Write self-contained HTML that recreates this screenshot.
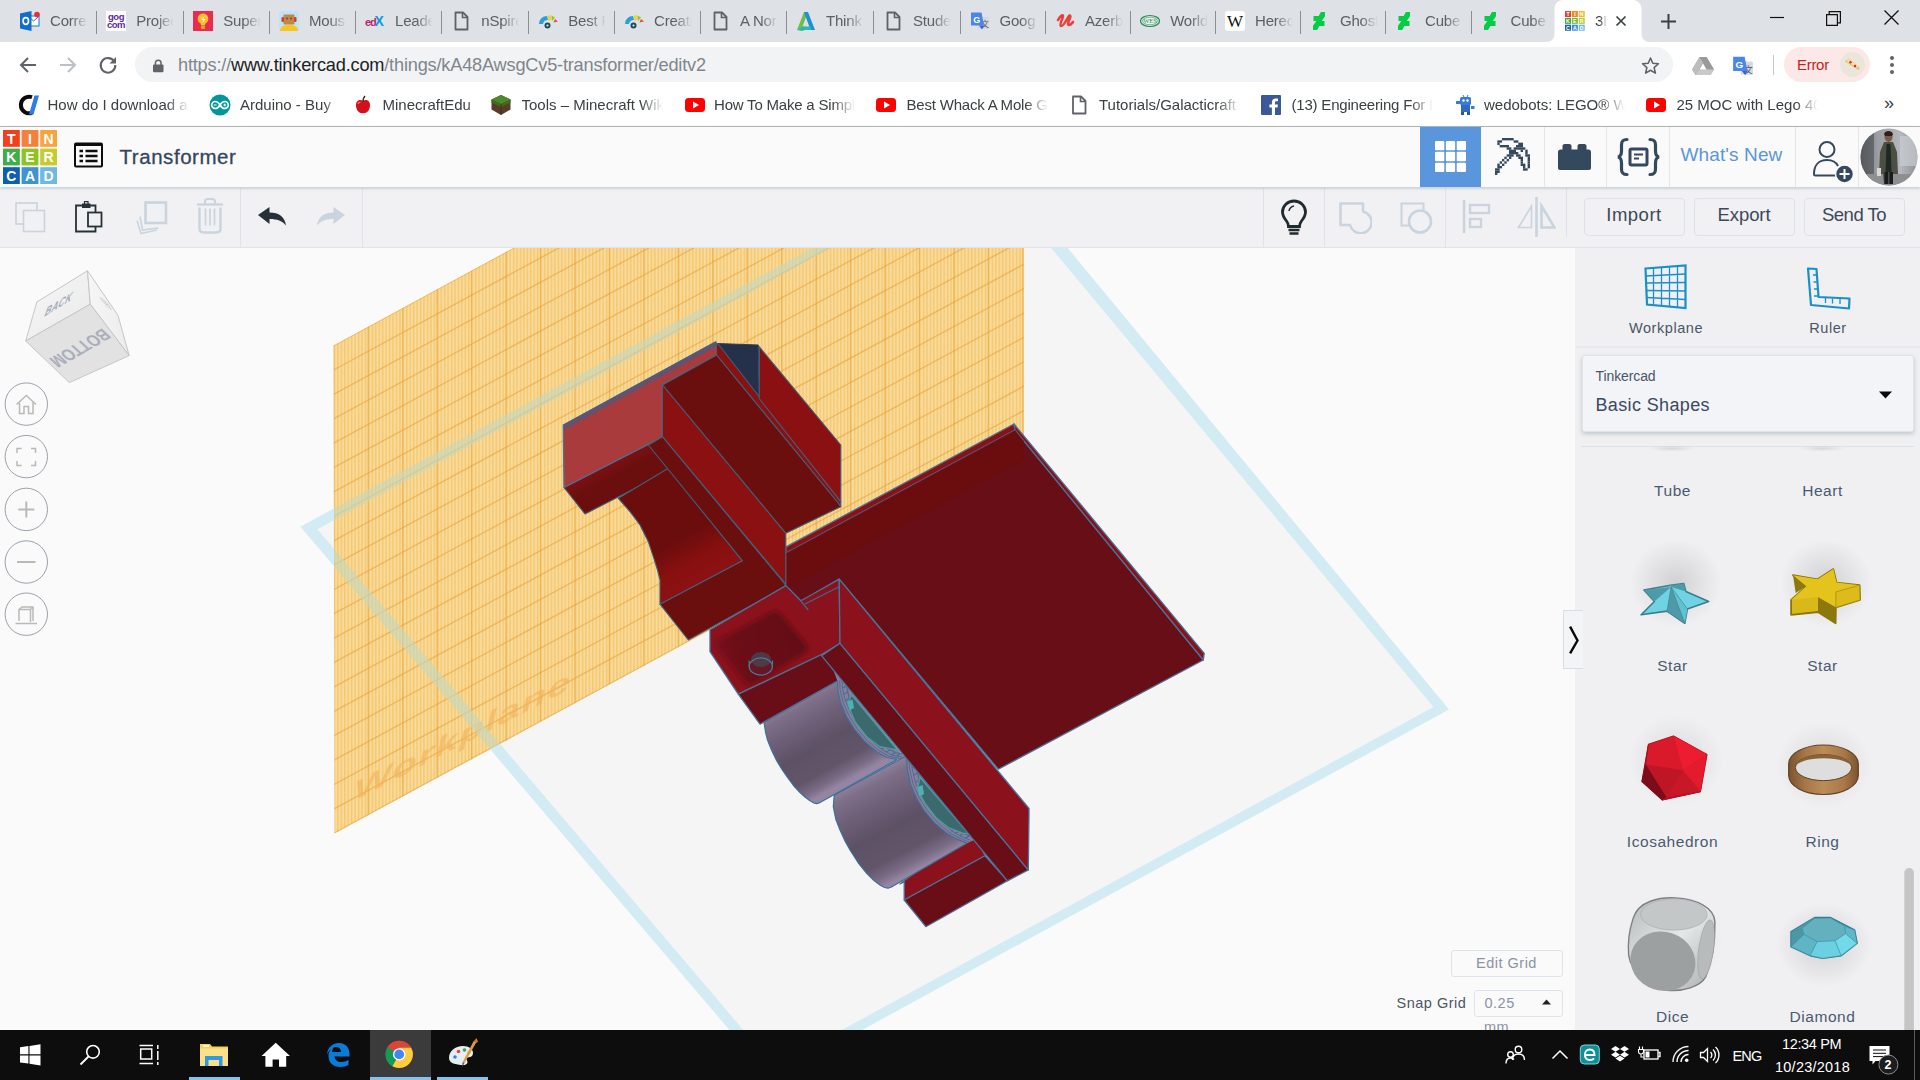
<!DOCTYPE html>
<html lang="en">
<head>
<meta charset="utf-8">
<title>3D design Transformer | Tinkercad</title>
<style>
*{box-sizing:border-box;margin:0;padding:0}
html,body{width:1920px;height:1080px;overflow:hidden;background:#fafafa;font-family:"Liberation Sans",sans-serif;}
.abs{position:absolute}
#tabbar{position:absolute;left:0;top:0;width:1920px;height:42px;background:#dee1e6}
.tab{position:absolute;top:0;height:42px;width:86px}
.tab .fav{position:absolute;left:0;top:11px;width:20px;height:20px}
.tab .tt{position:absolute;left:30px;top:11px;width:38px;height:22px;overflow:hidden;white-space:nowrap;font-size:15px;line-height:20px;color:#5c6066;letter-spacing:-0.2px;-webkit-mask-image:linear-gradient(90deg,#000 55%,transparent 100%);mask-image:linear-gradient(90deg,#000 55%,transparent 100%)}
.tab .sep{position:absolute;left:76px;top:11px;width:1px;height:23px;background:#8a8d92}
#addr{position:absolute;left:0;top:42px;width:1920px;height:46px;background:#fff}
#pill{position:absolute;left:135px;top:5px;width:1538px;height:35px;border-radius:18px;background:#f1f3f4}
#url{position:absolute;left:178px;top:12px;font-size:18.2px;line-height:22px;color:#80868b;white-space:nowrap;letter-spacing:-0.2px}
#url b{font-weight:normal;color:#202124}
#bm{position:absolute;left:0;top:88px;width:1920px;height:39px;background:#fff;border-bottom:1px solid #b6b6b6}
.bk{position:absolute;top:6px;height:22px;white-space:nowrap;font-size:15px;line-height:22px;color:#3c4043;overflow:hidden;-webkit-mask-image:linear-gradient(90deg,#000 84%,transparent 100%);mask-image:linear-gradient(90deg,#000 84%,transparent 100%)}
.bi{position:absolute;top:6px;width:22px;height:22px}
</style>
</head>
<body>
<div id="tabbar">
<div class="tab" style="left:10.5px;width:87.25px"><svg class="fav" style="left:9.5px" viewBox="0 0 20 20"><rect x="8" y="5" width="11" height="10" fill="#fff" stroke="#1a73d6" stroke-width="1"/><path d="M8.500 5.500l5 4.500 5-4.500" fill="none" stroke="#1a73d6" stroke-width="1"/><path d="M0 2.500L11.500 0v20L0 17.500z" fill="#0f6fcf"/><ellipse cx="5.800" cy="10" rx="2.700" ry="3.300" fill="none" stroke="#fff" stroke-width="1.700"/><circle cx="17" cy="3.500" r="2.800" fill="#f02b2b"/></svg><span class="tt" style="left:39.5px">Corre</span><i class="sep" style="left:85.75px"></i></div>
<div class="tab" style="left:96.75px;width:88.00px"><svg class="fav" style="left:9.5px" viewBox="0 0 20 20"><rect width="20" height="20" fill="#fff"/><text x="10" y="9" font-family="Liberation Sans,sans-serif" font-weight="bold" font-size="9.500" text-anchor="middle" fill="#5b2a9e" letter-spacing="-0.5">gog</text><text x="10" y="17" font-family="Liberation Sans,sans-serif" font-weight="bold" font-size="9.500" text-anchor="middle" fill="#5b2a9e" letter-spacing="-0.5">com</text></svg><span class="tt" style="left:39.5px">Projec</span><i class="sep" style="left:86.50px"></i></div>
<div class="tab" style="left:183.75px;width:86.75px"><svg class="fav" style="left:9.5px" viewBox="0 0 20 20"><rect width="20" height="20" fill="#ea2b50"/><path d="M10 2.500a5.200 5.200 0 0 0-3 9.500c.8.800 1 1.500 1 2.500h4c0-1 .2-1.700 1-2.500a5.200 5.200 0 0 0-3-9.500z" fill="#f9c22e"/><rect x="8" y="15" width="4" height="3" fill="#f0a020"/><path d="M11.500 5l-3 4h2l-1 3 3-4h-2z" fill="#fff"/></svg><span class="tt" style="left:39.5px">Super</span><i class="sep" style="left:85.25px"></i></div>
<div class="tab" style="left:269.5px;width:87.00px"><svg class="fav" style="left:9.5px" viewBox="0 0 20 20"><rect width="20" height="20" rx="3" fill="#bfe3f5"/><path d="M1 20c0-4 3-6 9-6s9 2 9 6z" fill="#f7c51e"/><rect x="4.500" y="3.500" width="11" height="10" rx="1" fill="#b98a4a"/><rect x="2.500" y="6" width="2.500" height="5" rx="1" fill="#d93a2b"/><rect x="15" y="6" width="2.500" height="5" rx="1" fill="#d93a2b"/><circle cx="8" cy="7.500" r="1" fill="#a33"/><circle cx="12" cy="7.500" r="1" fill="#a33"/></svg><span class="tt" style="left:39.5px">Mous</span><i class="sep" style="left:85.50px"></i></div>
<div class="tab" style="left:355.5px;width:87.25px"><svg class="fav" style="left:9.5px" viewBox="0 0 20 20"><text x="0" y="14.500" font-family="Liberation Sans,sans-serif" font-weight="bold" font-size="11" fill="#b72667" letter-spacing="-1.200">ed</text><text x="9.500" y="15" font-family="Liberation Sans,sans-serif" font-weight="bold" font-size="14" fill="#0a9bdc">X</text></svg><span class="tt" style="left:39.5px">Leade</span><i class="sep" style="left:85.75px"></i></div>
<div class="tab" style="left:441.75px;width:88.00px"><svg class="fav" style="left:9.5px" viewBox="0 0 20 20"><path d="M4.5 1.5h7.5l4.5 4.5v12.5h-12z" fill="none" stroke="#5f6368" stroke-width="1.8" stroke-linejoin="round"/><path d="M11.5 1.5v5h5" fill="none" stroke="#5f6368" stroke-width="1.6"/></svg><span class="tt" style="left:39.5px">nSpire</span><i class="sep" style="left:86.50px"></i></div>
<div class="tab" style="left:528.75px;width:86.75px"><svg class="fav" style="left:9.5px" viewBox="0 0 20 20"><path d="M1 13a8 8 0 0 1 8-8l1 4a5 5 0 0 0-5 4z" fill="#2b9fd9"/><path d="M9.500 5l3.500-1 .5 5-3 .5z" fill="#f5d327"/><path d="M13.500 4.500l3.500 2-3 3.500z" fill="#8bc34a"/><path d="M17 8l3 2.500-4.500 1z" fill="#e94e3a"/><circle cx="9.500" cy="14.500" r="3" fill="#1d4c5c"/><circle cx="9.500" cy="14.500" r="1.100" fill="#dfe3e8"/></svg><span class="tt" style="left:39.5px">Best F</span><i class="sep" style="left:85.25px"></i></div>
<div class="tab" style="left:614.5px;width:87.00px"><svg class="fav" style="left:9.5px" viewBox="0 0 20 20"><path d="M1 13a8 8 0 0 1 8-8l1 4a5 5 0 0 0-5 4z" fill="#2b9fd9"/><path d="M9.500 5l3.500-1 .5 5-3 .5z" fill="#f5d327"/><path d="M13.500 4.500l3.500 2-3 3.500z" fill="#8bc34a"/><path d="M17 8l3 2.500-4.500 1z" fill="#e94e3a"/><circle cx="9.500" cy="14.500" r="3" fill="#1d4c5c"/><circle cx="9.500" cy="14.500" r="1.100" fill="#dfe3e8"/></svg><span class="tt" style="left:39.5px">Creati</span><i class="sep" style="left:85.50px"></i></div>
<div class="tab" style="left:700.5px;width:87.00px"><svg class="fav" style="left:9.5px" viewBox="0 0 20 20"><path d="M4.5 1.5h7.5l4.5 4.5v12.5h-12z" fill="none" stroke="#5f6368" stroke-width="1.8" stroke-linejoin="round"/><path d="M11.5 1.5v5h5" fill="none" stroke="#5f6368" stroke-width="1.6"/></svg><span class="tt" style="left:39.5px">A Nor</span><i class="sep" style="left:85.50px"></i></div>
<div class="tab" style="left:786.5px;width:88.00px"><svg class="fav" style="left:9.5px" viewBox="0 0 20 20"><path d="M1 19L8 1h4l-5.500 14.500 4 -1z" fill="#6cc04a"/><path d="M8 1h4l7 18h-4.500z" fill="#1f8fd6"/><path d="M1 19l5.500-3.500 8 0 .5 3.500-6 0-3 1z" fill="#2fb7a8"/></svg><span class="tt" style="left:39.5px">Think</span><i class="sep" style="left:86.50px"></i></div>
<div class="tab" style="left:873.5px;width:87.50px"><svg class="fav" style="left:9.5px" viewBox="0 0 20 20"><path d="M4.5 1.5h7.5l4.5 4.5v12.5h-12z" fill="none" stroke="#5f6368" stroke-width="1.8" stroke-linejoin="round"/><path d="M11.5 1.5v5h5" fill="none" stroke="#5f6368" stroke-width="1.6"/></svg><span class="tt" style="left:39.5px">Stude</span><i class="sep" style="left:86.00px"></i></div>
<div class="tab" style="left:960px;width:86.50px"><svg class="fav" style="left:9.5px" viewBox="0 0 20 20"><rect x="8" y="6" width="11" height="12" rx="1" fill="#d5d8dc"/><text x="11" y="16" font-family="Liberation Sans,Noto Sans CJK SC,sans-serif" font-size="8" fill="#555">文</text><path d="M1 1.500h10.500l2.500 13H1z" fill="#4a86e8"/><path d="M9 14.500l3 4 2-4z" fill="#3367d6"/><text x="3.200" y="11.500" font-family="Liberation Sans,sans-serif" font-weight="bold" font-size="9" fill="#fff">G</text></svg><span class="tt" style="left:39.5px">Goog</span><i class="sep" style="left:85.00px"></i></div>
<div class="tab" style="left:1045.5px;width:86.20px"><svg class="fav" style="left:9.5px" viewBox="0 0 20 20"><path d="M3 9c2-4 5-6 5-4s-4 9-2 10 6-7 8-10c1-1 2 0 1 2s-3 7-1 7 3-2 4-3" fill="none" stroke="#e8413c" stroke-width="2.600" stroke-linecap="round"/></svg><span class="tt" style="left:39.5px">Azerb</span><i class="sep" style="left:84.70px"></i></div>
<div class="tab" style="left:1130.7px;width:85.80px"><svg class="fav" style="left:9.5px" viewBox="0 0 20 20"><ellipse cx="10" cy="10" rx="9.500" ry="5.500" fill="#e6f2ea" stroke="#2e8b57" stroke-width="1.200"/><ellipse cx="10" cy="10" rx="7.500" ry="3.800" fill="none" stroke="#2e8b57" stroke-width=".6"/><text x="10" y="12.300" font-family="Liberation Serif,serif" font-size="6.500" text-anchor="middle" fill="#2e8b57">WES</text></svg><span class="tt" style="left:39.5px">World</span><i class="sep" style="left:84.30px"></i></div>
<div class="tab" style="left:1215.5px;width:86.00px"><svg class="fav" style="left:9.5px" viewBox="0 0 20 20"><rect width="20" height="20" rx="3" fill="#fff"/><text x="10" y="16" font-family="Liberation Serif,serif" font-size="17" text-anchor="middle" fill="#111">W</text></svg><span class="tt" style="left:39.5px">Herec</span><i class="sep" style="left:84.50px"></i></div>
<div class="tab" style="left:1300.5px;width:86.00px"><svg class="fav" style="left:9.5px" viewBox="0 0 20 20"><path d="M15 1h-4l-.4.4L8.700 5H3.500v5h2.800L3 14.800V19h4l.4-.4L9.300 15h5.200v-5h-2.800L15 5.200z" fill="#05cc47"/></svg><span class="tt" style="left:39.5px">Ghost</span><i class="sep" style="left:84.50px"></i></div>
<div class="tab" style="left:1385.5px;width:86.50px"><svg class="fav" style="left:9.5px" viewBox="0 0 20 20"><path d="M15 1h-4l-.4.4L8.700 5H3.500v5h2.800L3 14.800V19h4l.4-.4L9.300 15h5.200v-5h-2.800L15 5.200z" fill="#05cc47"/></svg><span class="tt" style="left:39.5px">Cube</span><i class="sep" style="left:85.00px"></i></div>
<div class="tab" style="left:1471px;width:85.00px"><svg class="fav" style="left:9.5px" viewBox="0 0 20 20"><path d="M15 1h-4l-.4.4L8.700 5H3.500v5h2.800L3 14.800V19h4l.4-.4L9.300 15h5.200v-5h-2.800L15 5.200z" fill="#05cc47"/></svg><span class="tt" style="left:39.5px">Cube</span></div>
<svg class="abs" style="left:1546px;top:0;width:104px;height:42px" viewBox="0 0 104 42"><path d="M0 42c5 0 8.500-3 8.500-8V9c0-5 3.500-9 8.500-9h70c5 0 8.500 4 8.500 9v25c0 5 3.500 8 8.500 8z" fill="#fff"/></svg>
<svg class="abs" style="left:1565px;top:11px;width:20px;height:20px" viewBox="0 0 21 21">
<rect x="0" y="0" width="6.300" height="6.300" fill="#e0452c"/><rect x="7.200" y="0" width="6.300" height="6.300" fill="#ef8a24"/><rect x="14.400" y="0" width="6.300" height="6.300" fill="#f7b52c"/>
<rect x="0" y="7.200" width="6.300" height="6.300" fill="#4fa447"/><rect x="7.200" y="7.200" width="6.300" height="6.300" fill="#7dba3c"/><rect x="14.400" y="7.200" width="6.300" height="6.300" fill="#b5cc2e"/>
<rect x="0" y="14.400" width="6.300" height="6.300" fill="#1f62a8"/><rect x="7.200" y="14.400" width="6.300" height="6.300" fill="#3f8fd0"/><rect x="14.400" y="14.400" width="6.300" height="6.300" fill="#6cb8e6"/>
<g font-family="Liberation Sans,sans-serif" font-weight="bold" font-size="5.500" fill="#fff" text-anchor="middle"><text x="3.150" y="5.200">T</text><text x="10.350" y="5.200">I</text><text x="17.550" y="5.200">N</text><text x="3.150" y="12.400">K</text><text x="10.350" y="12.400">E</text><text x="17.550" y="12.400">R</text><text x="3.150" y="19.600">C</text><text x="10.350" y="19.600">A</text><text x="17.550" y="19.600">D</text></g></svg>
<span class="abs" style="left:1595px;top:11px;width:12px;height:22px;overflow:hidden;font-size:15px;line-height:20px;color:#3c4043;-webkit-mask-image:linear-gradient(90deg,#000 40%,transparent 100%);mask-image:linear-gradient(90deg,#000 40%,transparent 100%)">3D</span>
<svg class="abs" style="left:1615px;top:15px;width:12px;height:12px" viewBox="0 0 12 12"><path d="M1.500 1.500l9 9M10.500 1.500l-9 9" stroke="#3c4043" stroke-width="1.700" fill="none"/></svg>
<svg class="abs" style="left:1660px;top:13px;width:17px;height:17px" viewBox="0 0 17 17"><path d="M8.500 1v15M1 8.500h15" stroke="#3c4043" stroke-width="2" fill="none"/></svg>
<svg class="abs" style="left:1770px;top:10px;width:14px;height:14px" viewBox="0 0 14 14"><path d="M0 7.500h14" stroke="#111" stroke-width="1.200"/></svg>
<svg class="abs" style="left:1826px;top:11px;width:15px;height:15px" viewBox="0 0 15 15"><path d="M.6 3.600h10.800v10.800H.6z" fill="none" stroke="#111" stroke-width="1.200"/><path d="M3.200 3.400V.6h11.200v11.200h-2.800" fill="none" stroke="#111" stroke-width="1.200"/></svg>
<svg class="abs" style="left:1884px;top:10px;width:15px;height:15px" viewBox="0 0 15 15"><path d="M.5.500l14 14M14.500.5l-14 14" stroke="#111" stroke-width="1.300" fill="none"/></svg>
</div>
<div id="addr">
<svg class="abs" style="left:19px;top:14px;width:18px;height:18px" viewBox="0 0 18 18"><path d="M17 9H2.500M9 2L2 9l7 7" fill="none" stroke="#5f6368" stroke-width="2"/></svg>
<svg class="abs" style="left:59px;top:14px;width:18px;height:18px" viewBox="0 0 18 18"><path d="M1 9h14.500M9 2l7 7-7 7" fill="none" stroke="#bdc1c6" stroke-width="2"/></svg>
<svg class="abs" style="left:98px;top:13px;width:20px;height:20px" viewBox="0 0 20 20"><path d="M16.200 6.500A7.300 7.300 0 1 0 17.300 10" fill="none" stroke="#5f6368" stroke-width="2.100"/><path d="M18 2v6.500h-6.500z" fill="#5f6368"/></svg>
<div id="pill"></div>
<svg class="abs" style="left:153px;top:17px;width:10.500px;height:13.500px" viewBox="0 0 12 15"><rect x="0" y="6" width="12" height="9" rx="1.300" fill="#5f6368"/><path d="M2.800 6.500V4.300a3.200 3.200 0 0 1 6.400 0v2.200" fill="none" stroke="#5f6368" stroke-width="1.700"/></svg>
<div id="url">https://<b>www.tinkercad.com</b>/things/kA48AwsgCv5-transformer/editv2</div>
<svg class="abs" style="left:1640.500px;top:13.500px;width:19px;height:19px" viewBox="0 0 22 22"><path d="M11 2.300l2.600 6.100 6.600.6-5 4.400 1.500 6.500L11 16.500l-5.700 3.400 1.500-6.500-5-4.400 6.600-.6z" fill="none" stroke="#5f6368" stroke-width="1.800" stroke-linejoin="round"/></svg>
<svg class="abs" style="left:1692px;top:15px;width:22px;height:18px" viewBox="0 0 22 18"><path d="M7.500 0h7L22 12.500l-3.500 5.500h-15L0 12.500z" fill="#a8a8a8"/><path d="M7.500 0L0 12.500 3.500 18 11 5.500z" fill="#bdbdbd"/><path d="M14.500 0L22 12.500h-7L7.500 0z" fill="#9a9a9a"/><path d="M7 12.500h15L18.500 18h-15z" fill="#c9c9c9"/><path d="M11 6.500l3.400 6H7.600z" fill="#fff"/></svg>
<svg class="abs" style="left:1732px;top:13px;width:22px;height:22px" viewBox="0 0 20 20"><rect x="8" y="6" width="11" height="12" rx="1" fill="#d5d8dc"/><text x="11" y="16" font-family="Liberation Sans,Noto Sans CJK SC,sans-serif" font-size="8" fill="#555">文</text><path d="M1 1.500h10.500l2.500 13H1z" fill="#4a86e8"/><path d="M9 14.500l3 4 2-4z" fill="#3367d6"/><text x="3.200" y="11.500" font-family="Liberation Sans,sans-serif" font-weight="bold" font-size="9" fill="#fff">G</text></svg>
<i class="abs" style="left:1773px;top:13px;width:1px;height:20px;background:#c4c7cb"></i>
<div class="abs" style="left:1784px;top:5px;width:86px;height:35px;border-radius:18px;background:#fce8e6"></div>
<span class="abs" style="left:1797px;top:12px;font-size:15px;line-height:22px;color:#c5221f;letter-spacing:-0.3px">Error</span>
<svg class="abs" style="left:1840px;top:10px;width:25px;height:25px" viewBox="0 0 25 25"><circle cx="12.500" cy="12.500" r="12.500" fill="#ebe6dc"/><path d="M5 9.500l13.500 8.500 1-2.500-11-9z" fill="#e9b96a"/><path d="M6.500 9.500l11 6.500.7-1.200-9.700-7.800z" fill="#f6e3a4"/><circle cx="10.500" cy="10.300" r="1.200" fill="#c8332b"/><circle cx="15" cy="14" r="1.200" fill="#c8332b"/></svg>
<svg class="abs" style="left:1889px;top:13px;width:6px;height:20px" viewBox="0 0 6 20"><circle cx="3" cy="3" r="2" fill="#5f6368"/><circle cx="3" cy="10" r="2" fill="#5f6368"/><circle cx="3" cy="17" r="2" fill="#5f6368"/></svg>
</div>
<div id="bm">
<svg class="bi" style="left:18px" viewBox="0 0 22 22"><path d="M14 3.200A8.300 8.300 0 1 0 14 18.800" fill="none" stroke="#0b0b0b" stroke-width="4"/><path d="M13.500 1.500h4.500l-5.500 19h-4.500z" fill="#2b7de9" transform="translate(3 0)"/></svg>
<span class="bk" style="left:47.5px;width:141px">How do I download a</span>
<svg class="bi" style="left:209px" viewBox="0 0 22 22"><circle cx="11" cy="11" r="10.500" fill="#00979c"/><path d="M11 11c-1.500-2.500-3-3.500-4.800-3.500a3.500 3.500 0 0 0 0 7c1.800 0 3.300-1 4.800-3.500s3-3.500 4.800-3.500a3.500 3.500 0 0 1 0 7c-1.800 0-3.300-1-4.800-3.500z" fill="none" stroke="#fff" stroke-width="1.700"/><path d="M4.800 11h2.800M14.400 11h2.800M15.800 9.600v2.800" stroke="#fff" stroke-width="1"/></svg>
<span class="bk" style="left:240px;width:100px">Arduino - Buy</span>
<svg class="bi" style="left:352px" viewBox="0 0 22 22"><path d="M11 7c-2-2-7-1.500-7 4s3.500 9 7 8c3.500 1 7-2.500 7-8s-5-6-7-4z" fill="#d3111c"/><path d="M11 7.500c0-2 .5-4 2-5.500" stroke="#3a2a14" stroke-width="1.600" fill="none"/><path d="M6 10c.5-1.500 1.500-2 2.500-2" stroke="#ff7a7a" stroke-width="1.200" fill="none"/></svg>
<span class="bk" style="left:382.5px;width:100px">MinecraftEdu</span>
<svg class="bi" style="left:490px" viewBox="0 0 22 22"><path d="M11 1l9.500 4.500v10L11 21 1.500 15.500v-10z" fill="#5a3d28"/><path d="M11 1l9.500 4.500L11 10 1.500 5.500z" fill="#4d8a2e"/><path d="M1.500 5.500L11 10v3L1.500 8.500zM20.500 5.500L11 10v3l9.500-4.500z" fill="#3c6e22"/><path d="M11 10v11" stroke="#3d2a1b" stroke-width=".8"/></svg>
<span class="bk" style="left:521.5px;width:141px">Tools – Minecraft Wik</span>
<svg class="bi" style="left:683.5px" viewBox="0 0 22 22"><rect x="1" y="4" width="20" height="14" rx="3.500" fill="#f00"/><path d="M9 7.500v7l6-3.500z" fill="#fff"/></svg>
<span class="bk" style="left:714px;width:141px;letter-spacing:-.2px">How To Make a Simpl</span>
<svg class="bi" style="left:874.5px" viewBox="0 0 22 22"><rect x="1" y="4" width="20" height="14" rx="3.500" fill="#f00"/><path d="M9 7.500v7l6-3.500z" fill="#fff"/></svg>
<span class="bk" style="left:906.5px;width:141px;letter-spacing:-.2px">Best Whack A Mole G</span>
<svg class="bi" style="left:1068px" viewBox="0 0 22 22"><path d="M5 2.500h8l4.500 4.500v12.500H5z" fill="none" stroke="#5f6368" stroke-width="1.800" stroke-linejoin="round"/><path d="M12.500 2.500v5h5" fill="none" stroke="#5f6368" stroke-width="1.600"/></svg>
<span class="bk" style="left:1099px;width:141px">Tutorials/Galacticraft</span>
<svg class="bi" style="left:1260px" viewBox="0 0 22 22"><rect x="1" y="1" width="20" height="20" rx="1" fill="#3b5998"/><path d="M15 21v-7.500h2.500l.4-3H15V8.700c0-.9.300-1.500 1.500-1.500H18V4.500c-.300 0-1.200-.100-2.300-.100-2.300 0-3.800 1.400-3.800 3.900v2.200H9.400v3h2.500V21z" fill="#fff"/></svg>
<span class="bk" style="left:1291.5px;width:141px;letter-spacing:-.2px">(13) Engineering For I</span>
<svg class="bi" style="left:1453.500px" viewBox="0 0 22 22"><rect x="6" y="3" width="11" height="8" rx="1.500" fill="#3a7bd5"/><rect x="7" y="11" width="9" height="7" fill="#2f6ac0"/><rect x="2" y="7" width="4" height="3" fill="#3a7bd5"/><rect x="17" y="12" width="3.500" height="3" fill="#3a7bd5"/><rect x="7" y="18" width="3" height="3" fill="#2557a0"/><rect x="13" y="18" width="3" height="3" fill="#2557a0"/><circle cx="9.500" cy="6.500" r="1.200" fill="#fff"/><circle cx="13.500" cy="6.500" r="1.200" fill="#fff"/><path d="M9 1l1 2M14 1l-1 2" stroke="#3a7bd5" stroke-width="1"/></svg>
<span class="bk" style="left:1484px;width:141px">wedobots: LEGO® W</span>
<svg class="bi" style="left:1645px" viewBox="0 0 22 22"><rect x="1" y="4" width="20" height="14" rx="3.500" fill="#f00"/><path d="M9 7.500v7l6-3.500z" fill="#fff"/></svg>
<span class="bk" style="left:1676.5px;width:141px">25 MOC with Lego 40</span>
<span class="abs" style="left:1884px;top:4px;font-size:18px;line-height:22px;color:#3c4043">»</span>
</div>
<style>
#tkh{position:absolute;left:0;top:127px;width:1920px;height:60px;background:#fafafa;box-shadow:0 1px 3px rgba(120,140,170,.55);z-index:5}
#tkt{position:absolute;left:0;top:188px;width:1920px;height:60px;background:#f1f1f3;border-bottom:1px solid #dfe3ea;z-index:4}
.vs{position:absolute;top:0;width:1px;height:59px;background:#dfe3ea}
.hs{position:absolute;top:0;width:1px;height:60px;background:#e4e6ea}
.tbtn{position:absolute;top:10px;height:38px;width:101px;border:1px solid #dde1e8;border-radius:4px;font-size:18.500px;line-height:32px;text-align:center;color:#3c4858;letter-spacing:.5px}
</style>
<div id="tkh">
<svg class="abs" style="left:3px;top:3px;width:54px;height:54px" viewBox="0 0 54 54"><rect x="0.0" y="0.0" width="16.800" height="16.800" fill="#f0401e"/><rect x="18.6" y="0.0" width="16.800" height="16.800" fill="#f5803c"/><rect x="37.2" y="0.0" width="16.800" height="16.800" fill="#f8a33c"/><rect x="0.0" y="18.6" width="16.800" height="16.800" fill="#3fae49"/><rect x="18.6" y="18.6" width="16.800" height="16.800" fill="#8fc31f"/><rect x="37.2" y="18.6" width="16.800" height="16.800" fill="#c8cb2e"/><rect x="0.0" y="37.2" width="16.800" height="16.800" fill="#0f5eb0"/><rect x="18.6" y="37.2" width="16.800" height="16.800" fill="#3e93d1"/><rect x="37.2" y="37.2" width="16.800" height="16.800" fill="#6db9e3"/><g font-family="Liberation Sans,sans-serif" font-weight="bold" font-size="14" fill="#fff" text-anchor="middle"><text x="8.4" y="13.5">T</text><text x="27.0" y="13.5">I</text><text x="45.6" y="13.5">N</text><text x="8.4" y="32.1">K</text><text x="27.0" y="32.1">E</text><text x="45.6" y="32.1">R</text><text x="8.4" y="50.7">C</text><text x="27.0" y="50.7">A</text><text x="45.6" y="50.7">D</text></g></svg>
<svg class="abs" style="left:74px;top:15px;width:29px;height:26px" viewBox="0 0 29 26"><rect x="1" y="1.500" width="27" height="23" rx="1" fill="#fafafa" stroke="#0d0d0d" stroke-width="2"/><rect x="1" y="1" width="27" height="3" fill="#0d0d0d"/><path d="M5.500 9h3.500M5.500 14h3.500M5.500 19h3.500M11.500 9h12M11.500 14h12M11.500 19h12" stroke="#0d0d0d" stroke-width="2.600"/></svg>
<span class="abs" style="left:119.500px;top:16px;font-size:20.500px;line-height:28px;color:#35465c;letter-spacing:.55px;-webkit-text-stroke:.3px #35465c">Transformer</span>
<div class="abs" style="left:1420px;top:0;width:61px;height:60px;background:#5a96dc"></div>
<svg class="abs" style="left:1435px;top:14px;width:31px;height:31px" viewBox="0 0 31 31"><g fill="#fff"><rect x="0" y="0" width="9.300" height="9.300" rx="1"/><rect x="10.850" y="0" width="9.300" height="9.300" rx="1"/><rect x="21.700" y="0" width="9.300" height="9.300" rx="1"/><rect x="0" y="10.850" width="9.300" height="9.300" rx="1"/><rect x="10.850" y="10.850" width="9.300" height="9.300" rx="1"/><rect x="21.700" y="10.850" width="9.300" height="9.300" rx="1"/><rect x="0" y="21.700" width="9.300" height="9.300" rx="1"/><rect x="10.850" y="21.700" width="9.300" height="9.300" rx="1"/><rect x="21.700" y="21.700" width="9.300" height="9.300" rx="1"/></g></svg>
<i class="hs" style="left:1544px"></i><i class="hs" style="left:1606px"></i><i class="hs" style="left:1669px"></i><i class="hs" style="left:1795px"></i><i class="hs" style="left:1858px"></i>
<svg class="abs" style="left:1494.800px;top:10.800px;width:37.300px;height:37.300px" viewBox="0 0 37.300 37.300"><g fill="#34495e"><rect x="6.99" y="0.00" width="11.70" height="2.38"/><rect x="2.33" y="2.33" width="4.71" height="2.38"/><rect x="18.64" y="2.33" width="4.71" height="2.38"/><rect x="2.33" y="4.66" width="2.38" height="2.38"/><rect x="23.30" y="4.66" width="4.71" height="2.38"/><rect x="4.66" y="6.99" width="9.37" height="2.38"/><rect x="20.97" y="6.99" width="7.04" height="2.38"/><rect x="11.65" y="9.32" width="4.71" height="2.38"/><rect x="18.64" y="9.32" width="11.70" height="2.38"/><rect x="13.98" y="11.65" width="7.04" height="2.38"/><rect x="25.63" y="11.65" width="2.38" height="2.38"/><rect x="30.29" y="11.65" width="2.38" height="2.38"/><rect x="13.98" y="13.98" width="9.37" height="2.38"/><rect x="30.29" y="13.98" width="2.38" height="2.38"/><rect x="11.65" y="16.31" width="7.04" height="2.38"/><rect x="20.97" y="16.31" width="4.71" height="2.38"/><rect x="30.29" y="16.31" width="4.71" height="2.38"/><rect x="9.32" y="18.64" width="2.38" height="2.38"/><rect x="13.98" y="18.64" width="2.38" height="2.38"/><rect x="23.30" y="18.64" width="4.71" height="2.38"/><rect x="32.62" y="18.64" width="2.38" height="2.38"/><rect x="6.99" y="20.97" width="2.38" height="2.38"/><rect x="11.65" y="20.97" width="2.38" height="2.38"/><rect x="25.63" y="20.97" width="2.38" height="2.38"/><rect x="32.62" y="20.97" width="2.38" height="2.38"/><rect x="4.66" y="23.30" width="2.38" height="2.38"/><rect x="9.32" y="23.30" width="2.38" height="2.38"/><rect x="25.63" y="23.30" width="2.38" height="2.38"/><rect x="32.62" y="23.30" width="2.38" height="2.38"/><rect x="2.33" y="25.63" width="2.38" height="2.38"/><rect x="6.99" y="25.63" width="2.38" height="2.38"/><rect x="25.63" y="25.63" width="4.71" height="2.38"/><rect x="32.62" y="25.63" width="2.38" height="2.38"/><rect x="2.33" y="27.96" width="4.71" height="2.38"/><rect x="27.96" y="27.96" width="2.38" height="2.38"/><rect x="32.62" y="27.96" width="2.38" height="2.38"/><rect x="0.00" y="30.29" width="4.71" height="2.38"/><rect x="27.96" y="30.29" width="4.71" height="2.38"/><rect x="0.00" y="32.62" width="4.71" height="2.38"/><rect x="0.00" y="34.95" width="2.38" height="2.38"/></g></svg>
<svg class="abs" style="left:1558px;top:17px;width:33px;height:26px" viewBox="0 0 33 26"><path d="M0 8c0-1.500 1-2.500 2.500-2.500h2V2c0-1 .8-2 2-2h5c1.200 0 2 1 2 2v3.500h6V2c0-1 .8-2 2-2h5c1.200 0 2 1 2 2v3.500h2C32 5.500 33 6.500 33 8v16c0 1.200-.8 2-2 2H2c-1.200 0-2-.8-2-2z" fill="#34495e"/></svg>
<svg class="abs" style="left:1616px;top:10px;width:45px;height:40px" viewBox="0 0 45 40"><g fill="none" stroke="#34495e" stroke-width="3.200" stroke-linecap="round"><path d="M11 2.500c-4.500 0-5.500 2-5.500 5.500v6c0 3.500-1.200 5.500-3.500 6 2.300.5 3.500 2.500 3.500 6v6c0 3.500 1 5.500 5.500 5.500"/><path d="M34 2.500c4.500 0 5.500 2 5.500 5.500v6c0 3.500 1.200 5.500 3.500 6-2.300.5-3.500 2.500-3.500 6v6c0 3.500-1 5.500-5.500 5.500"/></g><rect x="14" y="12" width="17" height="16" rx="1.500" fill="none" stroke="#34495e" stroke-width="3"/><path d="M18 17.500h9M18 21.500h5" stroke="#34495e" stroke-width="2"/></svg>
<span class="abs" style="left:1680.500px;top:14px;font-size:19px;line-height:28px;color:#5a96dc;letter-spacing:.12px">What's New</span>
<svg class="abs" style="left:1812px;top:13px;width:43px;height:43px" viewBox="0 0 43 43"><circle cx="15" cy="9.500" r="7.500" fill="none" stroke="#34495e" stroke-width="2"/><path d="M28 35.500H3.500c-1 0-1.500-.5-1.500-1.500 0-9 5-14 13-14 5 0 9 2 11 6" fill="none" stroke="#34495e" stroke-width="2"/><circle cx="32.500" cy="34" r="9" fill="#34495e" stroke="#fafafa" stroke-width="1.500"/><path d="M32.500 29v10M27.500 34h10" stroke="#fff" stroke-width="2"/></svg>
<svg class="abs" style="left:1860px;top:1px;width:58px;height:58px" viewBox="0 0 58 58"><defs><clipPath id="avc"><circle cx="29" cy="29" r="28.500"/></clipPath><linearGradient id="avg" x1="0" y1="0" x2="1" y2="0"><stop offset="0" stop-color="#6a6e72"/><stop offset=".3" stop-color="#9a9ea3"/><stop offset=".7" stop-color="#b4b8bc"/><stop offset="1" stop-color="#8a8e92"/></linearGradient></defs><g clip-path="url(#avc)"><rect width="58" height="58" fill="url(#avg)"/><rect x="0" y="0" width="14" height="58" fill="#4a4d50" opacity=".6"/><rect x="40" y="8" width="18" height="30" fill="#c9cdd2" opacity=".7"/><rect x="0" y="46" width="58" height="12" fill="#8d8f90"/><path d="M24 14h9l4 10 1 22h-5l-1 10h-8l-1-10h-4l1-22z" fill="#4d4f45"/><path d="M26.500 16h4l1 28h-6z" fill="#1d2a22"/><ellipse cx="28.500" cy="9" rx="4" ry="5" fill="#7a5a48"/><path d="M24 6c1-4 8-4 9 0l-1 2h-7z" fill="#2a211c"/><rect x="24.500" y="44" width="3.500" height="12" fill="#1b1b1d"/><rect x="29.500" y="44" width="3.500" height="12" fill="#1b1b1d"/><rect x="17" y="40" width="4" height="8" fill="#d9d9d4"/></g></svg>
</div>
<div id="tkt">
<svg class="abs" style="left:15px;top:14px;width:31px;height:31px" viewBox="0 0 31 31"><rect x="1" y="1" width="21" height="21" fill="none" stroke="#c9d4de" stroke-width="1.600"/><rect x="8.500" y="8.500" width="21" height="21" fill="#f0f1f4" stroke="#c9d4de" stroke-width="1.600"/></svg>
<svg class="abs" style="left:75px;top:13px;width:28px;height:32px" viewBox="0 0 28 32"><path d="M8 4.500H1v26h19.500V26" fill="none" stroke="#263238" stroke-width="1.800"/><path d="M15 4.500h5.500V11" fill="none" stroke="#263238" stroke-width="1.800"/><rect x="7" y="2.500" width="8.500" height="4.500" fill="#263238"/><rect x="9.500" y=".6" width="3.500" height="3" fill="none" stroke="#263238" stroke-width="1.200"/><rect x="13" y="11.500" width="13.500" height="14" fill="#f0f1f4" stroke="#263238" stroke-width="1.800"/></svg>
<svg class="abs" style="left:133px;top:13px;width:35px;height:34px" viewBox="0 0 35 34"><path d="M4 19.500l4 13 16-3.500" fill="none" stroke="#c9d4de" stroke-width="1.600"/><path d="M7 15.500l2.500 13.500 16-2" fill="none" stroke="#c9d4de" stroke-width="1.600"/><rect x="12.500" y="1.500" width="20.500" height="20.500" fill="#f0f1f4" stroke="#c9d4de" stroke-width="2.600"/></svg>
<svg class="abs" style="left:196px;top:10px;width:28px;height:36px" viewBox="0 0 28 36"><path d="M1 6.500h26" stroke="#c9d4de" stroke-width="2.400"/><path d="M9 6V3.500c0-1.500 1-2.500 2.500-2.500h5c1.500 0 2.500 1 2.500 2.500V6" fill="none" stroke="#c9d4de" stroke-width="2"/><path d="M3.500 9.500v21c0 2.500 1.500 4 4 4h13c2.500 0 4-1.500 4-4v-21" fill="none" stroke="#c9d4de" stroke-width="2.400"/><path d="M9.500 10.500v17M14 10.500v17M18.500 10.500v17" stroke="#c9d4de" stroke-width="1.700"/></svg>
<i class="vs" style="left:240px"></i><i class="vs" style="left:362px"></i>
<svg class="abs" style="left:258px;top:19px;width:28px;height:19px" viewBox="0 0 28 19"><path d="M0 8L11.500 0v5.500C21 5.500 27 10 28 18.500 24.500 14 19 12 11.500 12v5z" fill="#263238"/></svg>
<svg class="abs" style="left:317px;top:19px;width:28px;height:19px" viewBox="0 0 28 19"><path d="M28 8L16.500 0v5.500C7 5.500 1 10 0 18.500 3.500 14 9 12 16.500 12v5z" fill="#c9d4de"/></svg>
<i class="vs" style="left:1263px"></i><i class="vs" style="left:1324px"></i><i class="vs" style="left:1445px"></i><i class="vs" style="left:1566px;height:49px"></i>
<svg class="abs" style="left:1279px;top:11px;width:30px;height:38px" viewBox="0 0 30 38"><path d="M15 2C8.500 2 3.500 7 3.500 13c0 4 2 6.500 4 9 1.500 2 2 3.500 2 5.500h11c0-2 .5-3.500 2-5.500 2-2.500 4-5 4-9C26.500 7 21.500 2 15 2z" fill="none" stroke="#1f2b2e" stroke-width="2.800"/><path d="M9.500 31h11M10.500 34.500h9" stroke="#1f2b2e" stroke-width="2.400"/><path d="M10 12c.5-3 2.500-4.500 5-5" fill="none" stroke="#1f2b2e" stroke-width="1.500"/></svg>
<svg class="abs" style="left:1339px;top:14px;width:33px;height:32px" viewBox="0 0 33 32"><path d="M1.500 1.500h22.500v8a11 11 0 1 1-13 13.500H1.500z" fill="none" stroke="#c9d4de" stroke-width="2.600" stroke-linejoin="round"/></svg>
<svg class="abs" style="left:1400px;top:14px;width:33px;height:32px" viewBox="0 0 33 32"><rect x="1.500" y="1.500" width="22" height="22" fill="none" stroke="#c9d4de" stroke-width="2"/><circle cx="20" cy="19.500" r="11" fill="#f0f1f4" stroke="#c9d4de" stroke-width="2.600"/></svg>
<svg class="abs" style="left:1462px;top:12px;width:29px;height:33px" viewBox="0 0 29 33"><path d="M2 0v33" stroke="#c9d4de" stroke-width="2.600"/><rect x="8" y="5" width="19" height="8" fill="none" stroke="#c9d4de" stroke-width="2.400"/><rect x="8" y="19" width="11" height="8" fill="none" stroke="#c9d4de" stroke-width="2.400"/></svg>
<svg class="abs" style="left:1517px;top:9px;width:39px;height:40px" viewBox="0 0 39 40"><path d="M19.500 0v40" stroke="#c9d4de" stroke-width="2.600"/><path d="M14.500 9v21.500H1.500z" fill="none" stroke="#c9d4de" stroke-width="1.600"/><path d="M24.500 9v21.500h13z" fill="none" stroke="#c9d4de" stroke-width="2.600"/></svg>
<div class="tbtn" style="left:1583.500px">Import</div><div class="tbtn" style="left:1693.500px;letter-spacing:-.1px">Export</div><div class="tbtn" style="left:1803.500px;letter-spacing:-.5px">Send To</div>
</div>
<svg class="abs" style="left:0;top:248px;width:1576px;height:782px" viewBox="0 248 1576 782">
<defs>
<pattern id="wpminor" width="3.445" height="8" patternUnits="userSpaceOnUse" x="333.75"><rect x="0" y="0" width="1.300" height="8" fill="#eda53a" opacity=".3"/><rect x="1.900" y="0" width="1" height="8" fill="#fff" opacity=".18"/></pattern>
<clipPath id="notwp"><path clip-rule="evenodd" d="M0 248H1576V1030H0zM333.600 345.600L513.300 248H1023.900V460L334.500 833.500z"/></clipPath>
<clipPath id="wpclip"><path d="M333.600 345.600L513.300 248H1023.900V460L334.500 833.500z"/></clipPath>
<linearGradient id="gLB" gradientUnits="userSpaceOnUse" x1="600" y1="455" x2="622" y2="497"><stop offset="0" stop-color="#8a1414"/><stop offset=".55" stop-color="#6b0e0e"/></linearGradient>
<linearGradient id="gCurve" gradientUnits="userSpaceOnUse" x1="701" y1="583" x2="678" y2="540"><stop offset="0" stop-color="#8d1113"/><stop offset=".45" stop-color="#88100f"/><stop offset="1" stop-color="#6b0d0d"/></linearGradient>
<linearGradient id="gW1" gradientUnits="userSpaceOnUse" x1="790" y1="700" x2="838" y2="786"><stop offset="0" stop-color="#94859f"/><stop offset=".12" stop-color="#7e6f88"/><stop offset=".3" stop-color="#6e6078"/><stop offset=".55" stop-color="#5d5166"/><stop offset=".8" stop-color="#625569"/><stop offset=".93" stop-color="#7c6d88"/><stop offset="1" stop-color="#9485a2"/></linearGradient>
<linearGradient id="gW2" gradientUnits="userSpaceOnUse" x1="862" y1="776" x2="912" y2="872"><stop offset="0" stop-color="#94859f"/><stop offset=".12" stop-color="#7e6f88"/><stop offset=".3" stop-color="#6e6078"/><stop offset=".55" stop-color="#5d5166"/><stop offset=".8" stop-color="#625569"/><stop offset=".93" stop-color="#7c6d88"/><stop offset="1" stop-color="#9485a2"/></linearGradient>
<linearGradient id="gDish" gradientUnits="userSpaceOnUse" x1="722" y1="660" x2="800" y2="636"><stop offset="0" stop-color="#76101b"/><stop offset=".3" stop-color="#6a0e17"/><stop offset="1" stop-color="#640c15"/></linearGradient>
<filter id="blur2" x="-20%" y="-20%" width="140%" height="140%"><feGaussianBlur stdDeviation="2.300"/></filter>
<filter id="blur1"><feGaussianBlur stdDeviation=".7"/></filter>
</defs>
<path d="M317.500 529.200L982.200 165.200 1433.400 707 774.600 1066.700z" fill="#f5f5f6"/>
<g clip-path="url(#wpclip)">
<rect x="330" y="248" width="700" height="600" fill="#f8d68d"/>
<rect x="330" y="248" width="700" height="600" fill="url(#wpminor)"/>
<path d="M333.75 248V840M368.20 248V840M402.65 248V840M437.10 248V840M471.55 248V840M506.00 248V840M540.45 248V840M574.90 248V840M609.35 248V840M643.80 248V840M678.25 248V840M712.70 248V840M747.15 248V840M781.60 248V840M816.05 248V840M850.50 248V840M884.95 248V840M919.40 248V840M953.85 248V840M988.30 248V840M1022.75 248V840M1057.20 248V840" stroke="#ea9c2c" stroke-width="1.200" opacity=".55" fill="none"/>
<path d="M333.60 345.60L1023.80 -28.50M333.60 370.00L1023.80 -4.11M333.60 394.39L1023.80 20.29M333.60 418.79L1023.80 44.69M333.60 443.18L1023.80 69.08M333.60 467.58L1023.80 93.48M333.60 491.97L1023.80 117.87M333.60 516.37L1023.80 142.26M333.60 540.76L1023.80 166.66M333.60 565.15L1023.80 191.05M333.60 589.55L1023.80 215.45M333.60 613.94L1023.80 239.84M333.60 638.34L1023.80 264.24M333.60 662.74L1023.80 288.63M333.60 687.13L1023.80 313.03M333.60 711.53L1023.80 337.43M333.60 735.92L1023.80 361.82M333.60 760.32L1023.80 386.22M333.60 784.71L1023.80 410.61M333.60 809.11L1023.80 435.00M333.60 833.50L1023.80 459.40" stroke="#ea9c2c" stroke-width="1.400" opacity=".5" fill="none"/>
</g>
<text transform="matrix(1 -.52 0 .66 354 801)" font-family="Liberation Sans,sans-serif" font-style="italic" font-weight="bold" font-size="40" fill="#f3b45c" opacity=".62" letter-spacing="1.500" x="0" y="0">Workplane</text>
<path d="M300.400 526.700L988.500 152.100 1449 709.500 771.600 1079.400zM317.500 529.200L774.600 1066.700 1433.400 707 982.200 165.200z" fill="#d3ebf3" fill-rule="evenodd" clip-path="url(#notwp)"/>
<path d="M300.400 526.700L988.500 152.100 1449 709.500 771.600 1079.400zM317.500 529.200L774.600 1066.700 1433.400 707 982.200 165.200z" fill="#c4d9c0" opacity=".62" fill-rule="evenodd" clip-path="url(#wpclip)"/>
<path d="M786.0 553.0 1015.0 430.0 1203.3 660.0 998.3 769.2 839.0 579.0 801.0 601.5 786.0 586.0z" fill="#680e16" stroke="#47739b" stroke-width="1.300" stroke-linejoin="round"/>
<path d="M786.0 546.9 1014.0 424.0 1015.0 430.0 786.0 553.0z" fill="#8a1116" stroke="#47739b" stroke-width="1.300" stroke-linejoin="round"/>
<path d="M1014.0 424.0 1204.2 653.3 1203.3 660.0 1015.0 430.0z" fill="#8a1116" stroke="#47739b" stroke-width="1.300" stroke-linejoin="round"/>
<path d="M786 553L1015 430 1023.900 441V460L786 589z" fill="#6c0e0c" opacity=".8"/>
<path d="M564.0 487.5 585.0 514.0 683.5 463.5 662.5 437.0z" fill="url(#gLB)" stroke="#40607a" stroke-width="1.100" stroke-linejoin="round"/>
<path d="M563.3 425.0 715.8 341.7 716.7 355.0 662.5 384.5 662.5 437.0 564.0 487.5z" fill="#a93b3c" stroke="#47739b" stroke-width="1.300" stroke-linejoin="round"/>
<path d="M563.600 428.700L716 345.200" stroke="#3f5f8a" stroke-width="1.800" fill="none"/>
<path d="M563.600 425.500L715.800 342.200" stroke="#40608c" stroke-width="1.600" fill="none"/>
<path d="M618.3 498.3 630.0 511.7 640.0 525.0 648.3 541.7 653.3 556.7 657.5 570.0 660.0 580.0 660.0 604.2 742.5 560.8 668.3 468.3z" fill="url(#gCurve)" stroke="#40607a" stroke-width="1.100" stroke-linejoin="round"/>
<path d="M648.3 445.0 662.5 436.7 785.0 584.2 785.0 586.7 688.3 640.0 660.0 604.2 742.5 560.8z" fill="#6b0e0e" stroke="#40607a" stroke-width="1.100" stroke-linejoin="round"/>
<path d="M662.5 385.0 716.7 355.0 838.3 503.0 840.8 506.7 785.8 533.3z" fill="#6b0e0e" stroke="#40607a" stroke-width="1.100" stroke-linejoin="round"/>
<path d="M662.5 385.0 785.8 533.3 785.8 584.2 662.5 436.7z" fill="#8b1012" stroke="#40607a" stroke-width="1.100" stroke-linejoin="round"/>
<path d="M717.5 343.5 758.3 345.0 759.3 398.0z" fill="#25304a" stroke="#2f3f5a" stroke-width="1"/>
<path d="M716.7 355.0 716.2 343.0 718.6 344.5 840.8 501.7 840.8 506.7 838.3 503.0z" fill="#8b1012" stroke="#40607a" stroke-width="1.100" stroke-linejoin="round"/>
<path d="M759.2 346.7 840.8 445.0 840.8 501.7 759.2 398.5z" fill="#8b1012" stroke="#40607a" stroke-width="1.100" stroke-linejoin="round"/>
<path d="M900.0 884.0 972.0 828.0 985.0 855.8 904.2 900.0 904.2 881.7z" fill="#8b121c" stroke="#47739b" stroke-width="1.300" stroke-linejoin="round"/>
<path d="M904.2 900.0 925.8 926.7 1007.5 880.8 985.0 855.8z" fill="#690e16" stroke="#47739b" stroke-width="1.300" stroke-linejoin="round"/>
<path d="M710.0 629.8 785.8 585.6 800.8 600.8 839.2 579.2 840.0 643.3 821.7 654.5 738.3 694.2 710.0 651.7z" fill="#8b121c" stroke="#47739b" stroke-width="1.300" stroke-linejoin="round"/>
<path d="M800.800 600.800L808.300 610M805 604L839.200 586.700" stroke="#3b6a94" stroke-width="1.200" fill="none"/>
<path d="M771.500 612Q776.500 609 780.500 613.500L806.500 644.500Q810 650 804 653.500L754 684Q748 687.500 744 682L717.500 648.500Q714 642.500 720 639z" fill="url(#gDish)" filter="url(#blur2)"/>
<path d="M749.200 660.500v6M772.500 660.500v6" fill="none" stroke="#4a7aa6" stroke-width="1.200"/>
<ellipse cx="761" cy="659.500" rx="10" ry="7.500" fill="#4c3a42"/>
<ellipse cx="760.800" cy="666.500" rx="11.600" ry="8.600" fill="#5a3a48" fill-opacity=".25" stroke="#4a7aa6" stroke-width="1.200"/>
<path d="M738.3 694.2 821.7 654.5 840.8 679.2 760.0 724.2z" fill="#690e16" stroke="#47739b" stroke-width="1.300" stroke-linejoin="round"/>
<path d="M837.5 681 837.9 690.8 840.8 703.3 846.7 716.7 855 730 865 741.7 876.7 751.7 886.7 757.5 897 759.5 906.7 760 833.3 670z" fill="#8c7d9a"/>
<path d="M839.7 679.8 840.1 689.6 843.0 702.1 848.9 715.5 857.2 728.8 867.2 740.5 878.9 750.5 888.9 756.3 899.2 758.3" fill="none" stroke="#3f6e98" stroke-width="1.0" opacity=".9"/>
<path d="M842.1 678.4 842.5 688.2 845.4 700.7 851.3 714.1 859.6 727.4 869.6 739.1 881.3 749.1 891.3 754.9 901.6 756.9" fill="none" stroke="#3f6e98" stroke-width="1.0" opacity=".9"/>
<path d="M846.0 676.0 846.4 685.8 849.3 698.3 855.2 711.7 863.5 725.0 873.5 736.7 885.2 746.7 895.2 752.5 905.5 754.5" fill="none" stroke="#3f6e98" stroke-width="1.2" opacity=".9"/>
<path d="M842.5 688.2L846.4 685.8M843.9 694.4L847.8 692.0M845.4 700.7L849.3 698.3M848.4 707.4L852.2 705.0M851.3 714.1L855.2 711.7M855.5 720.8L859.4 718.4M859.6 727.4L863.5 725.0M864.6 733.2L868.5 730.9M869.6 739.1L873.5 736.7M875.5 744.1L879.4 741.7M881.3 749.1L885.2 746.7M886.3 752.0L890.2 749.6M891.3 754.9L895.2 752.5M896.5 755.9L900.4 753.5" stroke="#3f6e98" stroke-width="1.100" fill="none"/>
<path d="M847.5 703.3 855 721.7 866.7 736.7 880 746.7 893.3 749.2 897.5 750 851.7 695z" fill="#3b6a6e" stroke="#4e9c9e" stroke-width="1.200"/>
<path d="M847.5 701.5 852.5 699.5 854 708 849.5 710.5z" fill="#4fb0b2"/>
<path d="M906.3 755.8 907.5 770.8 910.8 785 916.7 798.3 925 811.7 935 823.3 946.7 833.3 955 838.3 966.7 843.3 974.2 840 900 750z" fill="#8c7d9a"/>
<path d="M908.5 754.6 909.7 769.6 913.0 783.8 918.9 797.1 927.2 810.5 937.2 822.1 948.9 832.1 957.2 837.1 968.9 842.1" fill="none" stroke="#3f6e98" stroke-width="1.0" opacity=".9"/>
<path d="M910.9 753.2 912.1 768.2 915.4 782.4 921.3 795.7 929.6 809.1 939.6 820.7 951.3 830.7 959.6 835.7 971.3 840.7" fill="none" stroke="#3f6e98" stroke-width="1.0" opacity=".9"/>
<path d="M914.8 750.8 916.0 765.8 919.3 780.0 925.2 793.3 933.5 806.7 943.5 818.3 955.2 828.3 963.5 833.3 975.2 838.3" fill="none" stroke="#3f6e98" stroke-width="1.2" opacity=".9"/>
<path d="M912.1 768.2L916.0 765.8M913.8 775.3L917.6 772.9M915.4 782.4L919.3 780.0M918.4 789.0L922.2 786.6M921.3 795.7L925.2 793.3M925.5 802.4L929.4 800.0M929.6 809.1L933.5 806.7M934.6 814.9L938.5 812.5M939.6 820.7L943.5 818.3M945.5 825.7L949.4 823.3M951.3 830.7L955.2 828.3M955.5 833.2L959.4 830.8M959.6 835.7L963.5 833.3M965.5 838.2L969.4 835.8" stroke="#3f6e98" stroke-width="1.100" fill="none"/>
<path d="M917.5 789 925 803.3 936.7 818.3 948.3 827.5 963.3 833.3 968.3 833.3 920 777.5z" fill="#3b6a6e" stroke="#4e9c9e" stroke-width="1.200"/>
<path d="M917.5 787 922.5 785 924 794 919.5 796.5z" fill="#4fb0b2"/>
<path d="M764 722.5L837.5 681 837.9 690.8 840.8 703.3 846.7 716.7 855 730 865 741.7 876.7 751.7 886.7 757.5 897 759.5 820 802.6 816.7 803.6 813.5 802.8 810 800.8 805 797 800 792.5 793.5 785.5 787.5 777.5 782 769.5 776.7 760.8 771.5 750 767.5 740 765.5 732z" fill="url(#gW1)" stroke="#3f6e98" stroke-width="1.200" stroke-linejoin="round"/>
<path d="M834.2 795.2L906.3 755.8 907.5 770.8 910.8 785 916.7 798.3 925 811.7 935 823.3 946.7 833.3 955 838.3 966.7 843.3 891 887.2 888 888.2 884.5 887.5 880 885 874 880.5 866.7 873.3 858 862.5 850 850 845 841 840 830 835.8 819.2 833.3 806.7z" fill="url(#gW2)" stroke="#3f6e98" stroke-width="1.200" stroke-linejoin="round"/>
<path d="M840.0 643.3 1028.3 870.0 1007.5 880.8 821.7 655.8z" fill="#690e16" stroke="#47739b" stroke-width="1.300" stroke-linejoin="round"/>
<path d="M839.2 579.2 1029.0 808.5 1029.0 816.0 1028.3 870.0 840.0 643.3z" fill="#8b121c" stroke="#47739b" stroke-width="1.300" stroke-linejoin="round"/>
</svg>
<svg class="abs" style="left:0;top:250px;width:200px;height:400px" viewBox="0 250 200 400">
<defs>
<linearGradient id="cbk" x1="0" y1="0" x2="1" y2="1"><stop offset="0" stop-color="#f7f7f7"/><stop offset="1" stop-color="#e9e9e9"/></linearGradient>
<linearGradient id="clf" x1="0" y1="0" x2="1" y2="0"><stop offset="0" stop-color="#f6f6f6"/><stop offset="1" stop-color="#ececec"/></linearGradient>
</defs>
<g stroke="#c6c6ca" stroke-width="1" stroke-linejoin="round">
<path d="M87.500 270.800L36.800 302 25.700 341 90.300 304.200z" fill="url(#cbk)"/>
<path d="M87.500 270.800L118 315.300 129.200 355.600 90.300 304.200z" fill="url(#clf)"/>
<path d="M25.700 341L90.300 304.200 129.200 355.600 69.400 382.600z" fill="#e2e2e2"/>
</g>
<text transform="matrix(-.869 .495 -.95 -.905 102.500 328)" font-family="Liberation Sans,sans-serif" font-weight="bold" font-size="14.500" fill="#aaafbc">BOTTOM</text>
<text transform="matrix(.852 -.524 -.36 1.250 44 316.800)" font-family="Liberation Sans,sans-serif" font-weight="bold" font-style="italic" font-size="10.500" fill="#a4aab8" letter-spacing=".3">BACK</text>
<text transform="matrix(.28 .42 -1 -.6 99.500 297)" font-family="Liberation Sans,sans-serif" font-weight="bold" font-size="9" fill="#b4b9c4">LEFT</text>
<g fill="#fafafa" stroke="#9aa0aa" stroke-width="1"><circle cx="26.300" cy="404.100" r="21.200"/><circle cx="26.300" cy="456.600" r="21.200"/><circle cx="26.300" cy="509.400" r="21.200"/><circle cx="26.300" cy="562" r="21.200"/><circle cx="26.300" cy="614.200" r="21.200"/></g>
<g fill="none" stroke="#b9b9b9" stroke-width="1.500">
<path d="M16.500 404.500L26.300 395.500 36 404.500M19.500 402.500V413.500H24V406.500H28.500V413.500H33V402.500"/>
<path d="M17 453V448.500H21.500M31 448.500H35.500V453M35.500 461V465.500H31M21.500 465.500H17V461"/>
<path d="M26.300 501.500V517.500M18.300 509.500H34.300" stroke-width="2"/>
<path d="M17 562H35.500" stroke-width="2"/>
<path d="M15.500 623.500H37M19 621V609.500L22 607H33V621M19 609.500H30.500V622M30.500 609.500L33 607"/>
</g>
</svg>
<style>
#rp{position:absolute;left:1575px;top:248px;width:345px;height:782px;background:#f0f0f2;border-left:1px solid #f0f0f2;overflow:hidden}
.lbl{position:absolute;width:160px;text-align:center;font-size:15.500px;line-height:20px;color:#4a5a70;letter-spacing:.55px}
#card{position:absolute;left:6px;top:107px;width:332px;height:77px;background:#f3f4f7;border:1px solid #e1e4ea;border-radius:3px;box-shadow:0 2px 4px rgba(100,115,140,.35)}
</style>
<div id="rp">
<svg class="abs" style="left:0;top:0;width:344px;height:782px" viewBox="1576 248 344 782">
<defs>
<radialGradient id="sh"><stop offset="0" stop-color="#000" stop-opacity=".13"/><stop offset=".45" stop-color="#000" stop-opacity=".07"/><stop offset="1" stop-color="#000" stop-opacity="0"/></radialGradient>
<linearGradient id="ringg" x1="0" y1="0" x2="1" y2="0"><stop offset="0" stop-color="#7a5430"/><stop offset=".25" stop-color="#a87848"/><stop offset=".5" stop-color="#bb8c5a"/><stop offset=".8" stop-color="#a87848"/><stop offset="1" stop-color="#7a5430"/></linearGradient>
<linearGradient id="diceg" x1="0" y1="0" x2="1" y2="1"><stop offset="0" stop-color="#b4b8b9"/><stop offset=".5" stop-color="#e4e8e9"/><stop offset="1" stop-color="#a9adae"/></linearGradient>
</defs>
<!-- workplane icon -->
<g fill="none" stroke="#1a8fc9">
<path d="M1645.500 268.500L1685.500 265.500V308L1647 304.500z" stroke-width="2.200"/>
<path d="M1653.500 268V305M1661.500 267.400V306M1669.500 266.800V306.600M1677.500 266.200V307.300M1645.800 276L1685.500 274M1646 283L1685.500 282.500M1646.300 290.500L1685.500 291M1646.600 297.500L1685.500 299.500" stroke-width="1.300"/>
</g>
<!-- ruler icon -->
<path d="M1808 268.500L1816.500 269 1818.500 297 1849.500 298.500 1849 308.500 1811 305z" fill="none" stroke="#1a8fc9" stroke-width="2.200" stroke-linejoin="round"/>
<path d="M1813 275h4.500M1813.500 282h4.500M1814 289h4.500M1814 296h5M1825.500 298v5M1832.500 298.500v5M1840 299v5" stroke="#1a8fc9" stroke-width="1.300" fill="none"/>
<path d="M1576 347H1920" stroke="#dde1e8" stroke-width="1"/>
<path d="M1581 446.500H1914" stroke="#dde1e8" stroke-width="1"/>
<!-- shadows -->
<ellipse cx="1672" cy="448.500" rx="24" ry="3" fill="url(#sh)" opacity=".8"/>
<ellipse cx="1822" cy="448.500" rx="24" ry="3" fill="url(#sh)" opacity=".8"/>
<ellipse cx="1676" cy="583" rx="46" ry="44" fill="url(#sh)"/>
<ellipse cx="1826" cy="583" rx="46" ry="44" fill="url(#sh)"/>
<ellipse cx="1676" cy="760" rx="48" ry="46" fill="url(#sh)" opacity=".7"/>
<ellipse cx="1824" cy="765" rx="48" ry="44" fill="url(#sh)" opacity=".75"/>
<ellipse cx="1674" cy="940" rx="50" ry="48" fill="url(#sh)" opacity=".5"/>
<ellipse cx="1824" cy="945" rx="48" ry="42" fill="url(#sh)"/>

<path d="M1643.9 590.0 1670.4 585.2 1683.7 583.5 1685.9 591.5 1708.7 601.5 1687.4 608.9 1684.8 623.3 1667.0 611.1 1641.1 614.8 1654.4 601.5z" fill="#6fd3e3" stroke="#3a7e8c" stroke-width="1.600" stroke-linejoin="round"/>
<path d="M1643.9 590.0 1671.1 587.0 1654.4 601.5z" fill="#4f9aa8"/>
<path d="M1671.1 587.0 1667.0 611.1 1684.8 623.3 1678.1 599.6z" fill="#4f9aa8"/>
<path d="M1670.4 585.2 1683.7 583.5 1685.9 591.5 1671.1 587.0z" fill="#4f9aa8"/>
<path d="M1671.1 587.0 1684.8 623.3 1687.4 608.9z" fill="#62c0d0"/>
<path d="M1671.1 587.0 1684.8 623.3M1671.1 587.0 1687.4 608.9M1671.1 587.0 1667.0 611.1" stroke="#3a7e8c" stroke-width=".6" fill="none"/>
<path d="M1793.0 575.2 1817.6 579.3 1833.3 569.1 1836.5 582.6 1859.6 585.2 1860.0 600.0 1835.9 607.4 1835.6 623.3 1818.0 612.0 1791.1 614.8 1791.1 600.0 1806.3 586.3z" fill="#d9b91a" stroke="#8a7608" stroke-width="1.800" stroke-linejoin="round"/>
<path d="M1818.0 596.9 1835.6 607.0 1835.6 623.3 1818.0 612.0z" fill="#8d790b"/>
<path d="M1793.0 575.2 1806.3 586.3 1795.7 593.1z" fill="#8d790b"/>
<path d="M1793.0 575.2 1817.6 579.3 1833.3 569.1 1836.5 582.6 1859.6 585.2 1835.9 591.9 1835.6 607.0 1818.0 596.9 1791.1 600.0 1806.3 586.3z" fill="#e4c31c"/>
<path d="M1835.9 591.9 1859.6 585.2 1860.0 600.0 1835.9 607.4z" fill="#dcbb1a" stroke="#a8900e" stroke-width=".8"/>
<path d="M1673.5 736.1 1706.9 754.6 1700.4 791.7 1662.4 800.0 1642.0 781.5 1648.5 744.4z" fill="#c81828" stroke="#8f0f1c" stroke-width="1.200" stroke-linejoin="round"/>
<path d="M1673.5 736.1 1706.9 754.6 1682.8 770.4z" fill="#ed1c30" stroke="#ed1c30" stroke-width=".5"/>
<path d="M1648.5 744.4 1673.5 736.1 1682.8 770.4 1645.7 764.8z" fill="#d91a2b" stroke="#d91a2b" stroke-width=".5"/>
<path d="M1706.9 754.6 1700.4 791.7 1682.8 770.4z" fill="#e21b2d" stroke="#e21b2d" stroke-width=".5"/>
<path d="M1682.8 770.4 1700.4 791.7 1666.1 797.2z" fill="#c81828" stroke="#c81828" stroke-width=".5"/>
<path d="M1682.8 770.4 1666.1 797.2 1645.7 764.8z" fill="#bf1626" stroke="#bf1626" stroke-width=".5"/>
<path d="M1648.5 744.4 1645.7 764.8 1642.0 781.5z" fill="#a21121" stroke="#a21121" stroke-width=".5"/>
<path d="M1642.0 781.5 1645.7 764.8 1666.1 797.2 1662.4 800.0z" fill="#7c0c19" stroke="#7c0c19" stroke-width=".5"/>
<path d="M1666.1 797.2 1700.4 791.7 1662.4 800.0z" fill="#b31424" stroke="#b31424" stroke-width=".5"/>
<path d="M1788.7 763.9A34.8 18.9 0 0 1 1858.3 763.9V775.6A34.8 18.9 0 0 1 1788.7 775.6z" fill="url(#ringg)" stroke="#5f4222" stroke-width="1.200"/>
<ellipse cx="1823.5" cy="767.6" rx="28.1" ry="13.0" fill="#dedede" stroke="#5f4222" stroke-width="1"/>
<path d="M1795.4 767.6A28.1 13.0 0 0 1 1851.7 767.6A28.1 9.3 0 0 0 1795.4 767.6z" fill="#8a6238"/>
<path d="M1633.1 918.4C1638.4 900.7 1659.7 897.2 1675.6 897.9C1696.9 899.0 1714.6 907.8 1714.9 922.0C1715.3 943.2 1711.9 962.7 1705.7 976.9C1700.4 986.6 1682.7 991.9 1666.8 990.2C1650.8 987.5 1631.4 973.3 1628.7 955.6C1627.5 943.2 1629.6 929.1 1633.1 918.4z" fill="url(#diceg)" stroke="#7d8183" stroke-width="1.400"/>
<ellipse cx="1673.9" cy="914.5" rx="33.3" ry="15.6" fill="#c3c7c7" stroke="#a4a8a9" stroke-width=".6"/>
<ellipse cx="1662.9" cy="961.3" rx="32.9" ry="29.4" fill="#9da0a1" transform="rotate(18 1662.9 961.3)"/>
<ellipse cx="1706.1" cy="949.4" rx="7.4" ry="29.8" fill="#b7bbbb" stroke="#989c9d" stroke-width=".5" transform="rotate(8 1706.1 949.4)"/>
<path d="M1791.1 931.7 1814.6 917.6 1830.6 917.6 1854.5 929.9 1857.1 943.2 1841.2 955.6 1822.6 958.3 1810.2 955.6 1791.1 946.8z" fill="#5eb5c5" stroke="#2f7f90" stroke-width="1.600" stroke-linejoin="round"/>
<path d="M1791.1 931.7 1802.2 928.2 1804.0 934.4 1791.1 946.8z" fill="#4c96a6" stroke="#3f8fa0" stroke-width=".5"/>
<path d="M1791.1 931.7 1814.6 917.6 1814.6 918.8 1802.2 928.2z" fill="#4f9aaa" stroke="#3f8fa0" stroke-width=".5"/>
<path d="M1791.1 946.8 1804.0 934.4 1817.3 941.5 1810.2 955.6z" fill="#5eb5c5" stroke="#3f8fa0" stroke-width=".5"/>
<path d="M1817.3 941.5 1835.0 940.6 1841.2 955.6 1822.6 958.3 1810.2 955.6z" fill="#6dd0e0" stroke="#3f8fa0" stroke-width=".5"/>
<path d="M1835.0 940.6 1845.6 933.5 1857.1 943.2 1841.2 955.6z" fill="#72d9e9" stroke="#3f8fa0" stroke-width=".5"/>
<path d="M1844.7 926.4 1854.5 929.9 1857.1 943.2 1845.6 933.5z" fill="#5fb8c8" stroke="#3f8fa0" stroke-width=".5"/>
<path d="M1802.2 928.2 1814.6 918.4 1830.6 918.1 1844.7 926.4 1845.6 933.5 1835.0 940.6 1817.3 941.5 1804.0 934.4z" fill="#63b0bf" stroke="#3f8fa0" stroke-width=".5"/>
<rect x="1904.300" y="868" width="9.600" height="175" rx="4.800" fill="#c5c5c5"/>
</svg>
<span class="lbl" style="left:10px;top:70px;font-size:14.500px;color:#4a5668">Workplane</span>
<span class="lbl" style="left:172px;top:70px;font-size:14.500px;color:#4a5668">Ruler</span>
<div id="card"><span class="abs" style="left:12.500px;top:10px;font-size:14px;line-height:20px;color:#4a5668;letter-spacing:-.1px">Tinkercad</span><span class="abs" style="left:12.500px;top:36px;font-size:18px;line-height:26px;color:#3a4a60;letter-spacing:.36px">Basic Shapes</span><svg class="abs" style="left:296px;top:35px;width:13px;height:8px" viewBox="0 0 13 8"><path d="M0 .5h13L6.500 7.500z" fill="#0a0a0a"/></svg></div>
<span class="lbl" style="left:16.5px;top:232.5px">Tube</span>
<span class="lbl" style="left:166.5px;top:232.5px">Heart</span>
<span class="lbl" style="left:16.5px;top:407.5px">Star</span>
<span class="lbl" style="left:166.5px;top:407.5px">Star</span>
<span class="lbl" style="left:16.5px;top:583.5px">Icosahedron</span>
<span class="lbl" style="left:166.5px;top:583.5px">Ring</span>
<span class="lbl" style="left:16.5px;top:758.5px">Dice</span>
<span class="lbl" style="left:166.5px;top:758.5px">Diamond</span>
</div>
<div class="abs" style="left:1563px;top:610px;width:20px;height:59px;background:#f3f4f6;border:1px solid #d8dde6;border-right:none"></div>
<svg class="abs" style="left:1566px;top:622px;width:16px;height:36px" viewBox="1566 622 16 36"><path d="M1570.100 626.600L1577.500 640.500 1570.100 653.400" fill="none" stroke="#0a0a0a" stroke-width="2.400" stroke-linejoin="miter"/></svg>
<div class="abs" style="left:1450.500px;top:950px;width:112px;height:27px;border:1px solid #dfe3ea;border-radius:3px;background:#fafafa;text-align:center;font-size:14.500px;line-height:24px;color:#8a94a4;letter-spacing:.5px">Edit Grid</div>
<span class="abs" style="left:1396.500px;top:993px;font-size:14.500px;line-height:20px;color:#4a5668;letter-spacing:.5px">Snap Grid</span>
<div class="abs" style="left:1473.500px;top:990px;width:89px;height:27px;border:1px solid #dfe3ea;border-radius:3px;background:#fafafa"><span class="abs" style="left:10px;top:2px;font-size:14.500px;line-height:20px;color:#8a94a4;letter-spacing:.5px">0.25</span><svg class="abs" style="left:67px;top:8px;width:9px;height:6px" viewBox="0 0 9 6"><path d="M0 5.500h9L4.500 .5z" fill="#222"/></svg></div>
<span class="abs" style="left:1484px;top:1017px;font-size:14.500px;line-height:20px;color:#8a94a4;letter-spacing:.5px">mm</span>
<div id="tb" class="abs" style="left:0;top:1030px;width:1920px;height:50px;background:#0d0d0d;z-index:20">
<svg class="abs" style="left:0;top:0;width:1920px;height:50px" viewBox="0 1030 1920 50">
<rect x="370" y="1030" width="61" height="50" fill="#3b3b3b"/>
<rect x="189" y="1077" width="51" height="3" fill="#7fc4f3"/><rect x="370" y="1077" width="61" height="3" fill="#7fc4f3"/><rect x="437" y="1077" width="51" height="3" fill="#7fc4f3"/>
<!-- windows -->
<path d="M20 1047.300l8.400-1.200v8.200H20zM29.500 1045.900l11-1.600v10H29.500zM20 1055.400h8.400v8.200l-8.400-1.200zM29.500 1055.400h11v10l-11-1.600z" fill="#fff"/>
<!-- search -->
<circle cx="93" cy="1051.800" r="6.300" fill="none" stroke="#fff" stroke-width="1.600"/><path d="M88.500 1056.500L80.500 1064.500" stroke="#fff" stroke-width="1.800"/>
<!-- task view -->
<g fill="none" stroke="#fff" stroke-width="1.500"><rect x="140.700" y="1049" width="11" height="10"/><path d="M139.500 1045.500h13.500M139.500 1063.500h13.500M157.800 1045v4M157.800 1051v9M157.800 1062v3"/></g>
<!-- explorer -->
<path d="M200 1044h10l2 2.500h16v19.500h-28z" fill="#f6cf5a"/><path d="M200 1048.500h28v17.500h-28z" fill="#fbe08a"/><path d="M205 1056h17.500v10h-3.500v-6h-10.500v6H205z" fill="#2f9ae0"/><rect x="203" y="1045.300" width="6" height="1.500" fill="#fff"/>
<!-- home -->
<path d="M275.700 1042.700L290 1056h-3.800v10.700h-7.200v-7.200h-6.400v7.200h-7.200V1056h-3.800z" fill="#fff"/>
<!-- edge -->
<path d="M327 1054.500c.5-7 5.500-11.500 12-11.500 7 0 10.500 5 10.500 11v2.500h-15c.3 3.500 3 5.500 7 5.500 2.500 0 5-.7 7-2v5c-2.300 1.300-5 2-8.300 2-7 0-11.700-4.300-11.700-11 0-4.500 2.500-8 6-9.500-1.500 1.500-2.300 3.500-2.500 5.500h9c0-3-1.700-5-4.800-5-3.500 0-7 2.500-9.200 7.500z" fill="#0b7bd8"/>
<!-- chrome -->
<circle cx="399.200" cy="1054.400" r="13.600" fill="#db4437"/>
<path d="M399.200 1054.400L387.400 1047.600A13.600 13.600 0 0 0 392.400 1066.200z" fill="#0f9d58"/><path d="M399.200 1054.400L392.400 1066.200A13.600 13.600 0 0 0 399.200 1068A13.600 13.600 0 0 0 411 1047.600H399.200z" fill="#ffcd40"/>
<path d="M387.400 1047.600A13.600 13.600 0 0 1 411 1047.600H399.200z" fill="#db4437"/>
<path d="M387.400 1047.600L393.300 1057.800 399.200 1054.400z" fill="#0f9d58"/>
<circle cx="399.200" cy="1054.400" r="6.200" fill="#fff"/><circle cx="399.200" cy="1054.400" r="4.900" fill="#4285f4"/>
<!-- paint -->
<path d="M449 1058c0-7 6-12 14-12 6 0 10 3 10 7 0 3-2 4-4.500 4.200-2 .2-2.500 1.800-1.500 3.300 1.200 2 .2 4.500-3.500 4.500-8 0-14.500-2-14.500-7z" fill="#e6eef5"/><circle cx="455" cy="1057" r="1.800" fill="#3b7fd9"/><circle cx="458.500" cy="1051.500" r="1.800" fill="#e8453c"/><circle cx="464.500" cy="1050" r="1.800" fill="#43a047"/><circle cx="469" cy="1052.500" r="1.700" fill="#f9a825"/><path d="M476.500 1042l-12 21-1.800-1 11-21z" fill="#e09a3e"/><path d="M464.500 1063l-2.500 4 .7-5z" fill="#555"/><path d="M474 1041l2.500-3 1.500 3.500-1.500 1.500z" fill="#c97b2a"/>
<!-- people -->
<g fill="none" stroke="#fff" stroke-width="1.400"><circle cx="1518.500" cy="1049.500" r="3.300"/><path d="M1512.500 1060c0-4 2.500-6 6-6s6 2 6 6"/><circle cx="1510.500" cy="1054.500" r="2.800"/><path d="M1506 1063.500c0-3.500 2-5.500 4.500-5.500 1.500 0 2.700.5 3.500 1.500"/></g>
<path d="M1552.500 1058.500l7.500-7.500 7.500 7.500" fill="none" stroke="#fff" stroke-width="1.500"/>
<!-- eset -->
<rect x="1580.300" y="1045" width="19" height="19" rx="4" fill="#0f8f98" stroke="#7fd6dc" stroke-width="1"/><path d="M1585 1055h9.500c0-3.500-2-5.500-4.800-5.500s-4.800 2.200-4.800 5.300 2 5.200 5 5.200c1.800 0 3.200-.6 4.200-1.700" fill="none" stroke="#fff" stroke-width="1.900"/>
<!-- dropbox -->
<path d="M1615.500 1046l4.500 2.900-4.500 2.900-4.500-2.900zM1624.500 1046l4.500 2.900-4.500 2.900-4.500-2.900zM1611 1054.700l4.500-2.900 4.500 2.900-4.500 2.900zM1624.500 1051.800l4.500 2.900-4.500 2.900-4.500-2.900zM1615.500 1058.600l4.500-2.900 4.500 2.900-4.500 2.900z" fill="#fff"/>
<!-- battery -->
<g fill="none" stroke="#fff" stroke-width="1.300"><rect x="1644" y="1050" width="14" height="9"/><path d="M1658.500 1052.500h1.500v4h-1.500"/></g><rect x="1645.500" y="1051.500" width="4" height="6" fill="#fff"/><path d="M1639.500 1046.500v3M1642.500 1046.500v3M1638.500 1049.500h5v2c0 1.500-1 2.500-2.500 2.500s-2.500-1-2.500-2.500zM1641 1054v3h2.500" fill="none" stroke="#fff" stroke-width="1.100"/>
<!-- wifi -->
<g fill="none" stroke="#fff" stroke-width="1.400"><path d="M1673 1062A15.500 15.500 0 0 1 1688.500 1046.500" opacity=".95"/><path d="M1677 1062A11.500 11.500 0 0 1 1688.500 1050.500"/><path d="M1681 1062A7.500 7.500 0 0 1 1688.500 1054.500"/></g><circle cx="1686.700" cy="1060.300" r="1.800" fill="#fff"/>
<!-- volume -->
<g fill="none" stroke="#fff" stroke-width="1.300"><path d="M1700.500 1052.500h3l4-4v13l-4-4h-3z"/><path d="M1710.500 1052a4 4 0 0 1 0 6"/><path d="M1713 1049.500a7.500 7.500 0 0 1 0 11"/><path d="M1715.500 1047a11 11 0 0 1 0 16"/></g>
<!-- notification -->
<path d="M1869.500 1046h20v15h-14l-3 3.500v-3.500h-3z" fill="#fff"/><path d="M1873 1050h13M1873 1053.300h13M1873 1056.600h13" stroke="#0d0d0d" stroke-width="1"/>
<circle cx="1888.400" cy="1064.600" r="9.500" fill="#1d1d1d" stroke="#8a8a8a" stroke-width="1"/>
<path d="M1914.500 1030v50" stroke="#5a5a5a" stroke-width="1"/>
</svg>
<span class="abs" style="left:1732.500px;top:17px;font-size:14.500px;line-height:18px;color:#fff;letter-spacing:-.8px">ENG</span>
<span class="abs" style="left:1782px;top:5px;font-size:14.500px;line-height:18px;color:#fff;letter-spacing:-.35px">12:34 PM</span>
<span class="abs" style="left:1775px;top:28px;font-size:14.500px;line-height:18px;color:#fff;letter-spacing:.24px">10/23/2018</span>
<span class="abs" style="left:1884.500px;top:27px;font-size:12.500px;line-height:16px;color:#fff;font-weight:bold">2</span>
</div>
</body></html>
